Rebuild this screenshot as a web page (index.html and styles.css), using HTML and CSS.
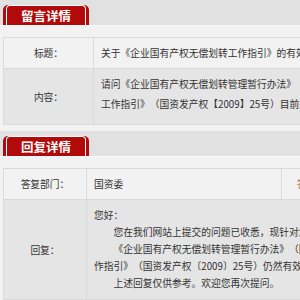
FILE: index.html
```html
<!DOCTYPE html>
<html lang="zh-CN">
<head>
   <meta charset="UTF-8">
   <meta name="viewport" content="width=device-width, initial-scale=1.0">
   <title>留言详情</title>
   <link rel="stylesheet" href="styles.css">
</head>
<body>
   <div class="wrapper">
      <div class="panel">
         <div class="panel-head">
            <div class="tab"><span>留言详情</span></div>
         </div>
         <div class="panel-body">
            <table class="info-table msg-table">
               <tr class="row-light">
                  <td class="label">标题：</td>
                  <td>关于《企业国有产权无偿划转工作指引》的有效性问题</td>
               </tr>
               <tr class="row-dark">
                  <td class="label">内容：</td>
                  <td class="content">请问《企业国有产权无偿划转管理暂行办法》《企业国有产权转让管理办法》、《企业国有产权无偿划转工作指引》（国资发产权【2009】25号）目前是否仍然有效？</td>
               </tr>
            </table>
         </div>
      </div>

      <div class="panel">
         <div class="panel-head">
            <div class="tab"><span>回复详情</span></div>
         </div>
         <div class="panel-body">
            <table class="info-table reply-table">
               <tr class="row-light">
                  <td class="label dept-label">答复部门：</td>
                  <td class="dept-value">国资委</td>
                  <td class="label time-label">答复时间：</td>
                  <td>2016-03-18</td>
               </tr>
               <tr class="row-dark">
                  <td class="label">回复：</td>
                  <td colspan="3" class="reply">
                     <p class="greet">您好：</p>
                     <p>您在我们网站上提交的问题已收悉，现针对您的问题答复如下：</p>
                     <p>《企业国有产权无偿划转管理暂行办法》（国资发产权〔2005〕239号）、《企业国有产权无偿划转工作指引》（国资发产权〔2009〕25号）仍然有效。</p>
                     <p>上述回复仅供参考。欢迎您再次提问。</p>
                  </td>
               </tr>
            </table>
         </div>
      </div>
   </div>
</body>
</html>
```

FILE: styles.css
```css
html, body {
   overflow: hidden;
}

body {
   margin: 0;
   padding: 0;
   background-color: #f2f2f2;
   font-family: "Noto Sans CJK SC", "Liberation Sans", sans-serif;
   font-size: 9.75px;
   color: #333;
   text-spacing-trim: space-all; /* keep full-width punctuation full width */
}

.wrapper {
   width: 560px;
}

.panel {
   margin-bottom: 6px;
}

.panel-head {
   height: 20px;
   padding-top: 5px;
   background-color: #e1e1e1;
   border-bottom: 1px solid #fafafa;
}

/* red tab with a thin white inner line */
.tab {
   display: inline-block;
   margin-left: 3px;
   padding: 0 3px;
   background-color: #b20a0a;
   border-radius: 5px 5px 0 0;
}

.tab span {
   display: block;
   height: 19px;
   padding: 0 14px;
   border: 1px solid #fff;
   border-bottom: none;
   border-radius: 4px 4px 0 0;
   background-color: #b20a0a;
   color: #fff;
   font-size: 12.5px;
   font-weight: bold;
   line-height: 19px;
}

.panel-body {
   padding: 11px 0 0 3px;
}

.info-table {
   width: 557px;
   border-collapse: collapse;
   table-layout: fixed;
   border: 1px solid #dadada;
}

.info-table td {
   padding: 5px 7px;
   border: 1px solid #dadada;
   line-height: 20px;
   vertical-align: top;
}

.info-table td.label {
   text-align: center;
   vertical-align: middle;
}

.msg-table .label {
   width: 75px;
}

.reply-table .dept-label {
   width: 68px;
}

.reply-table .dept-value {
   width: 180px;
}

.reply-table .time-label {
   width: 64px;
   color: #a8743c;
}

.row-light {
   background-color: #f2f2f2;
}

.row-dark {
   background-color: #e5e5e5;
}

.info-table td.content {
   padding-bottom: 10px;
}

.info-table td.reply {
   padding: 7px;
   line-height: 17px;
}

.reply p {
   margin: 0;
   text-indent: 2em;
}

.reply p.greet {
   text-indent: 0;
}
```
